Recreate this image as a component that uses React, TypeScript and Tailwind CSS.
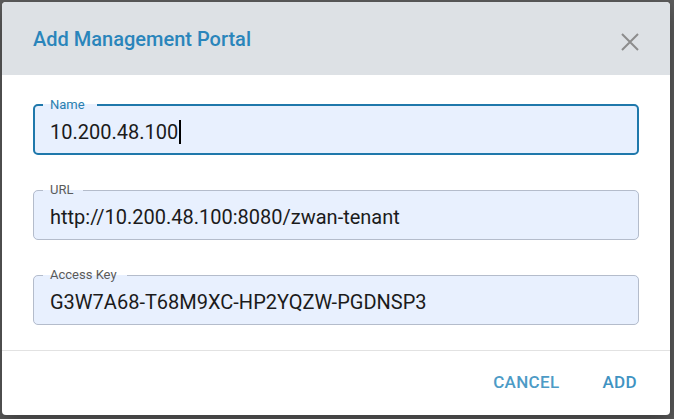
import React from "react";

type FieldProps = {
  label: string;
  value: string;
  focused?: boolean;
  notchRight: number;
};

function Field({ label, value, focused, notchRight }: FieldProps) {
  return (
    <fieldset
      className={
        focused
          ? "rounded-[5px] border-2 border-[#1f78ab] bg-[#e8f0fe] pl-[8px] pb-[1px]"
          : "rounded-[5px] border border-[#b4bccb] bg-[#e8f0fe] pl-[9px] pb-[1px]"
      }
    >
      <legend
        className={
          focused
            ? "pl-[7px] text-[13px] leading-[12px] text-[#2a7fb0]"
            : "pl-[7px] text-[13px] leading-[12px] text-[#5a5a5a]"
        }
        style={{ paddingRight: notchRight }}
      >
        {label}
      </legend>
      <div
        className={
          focused
            ? "flex h-[41px] items-center pl-[7px] text-[20px] text-[#1b1b1b]"
            : "flex h-[42px] items-center pl-[7px] text-[20px] text-[#1b1b1b]"
        }
      >
        <span>{value}</span>
        {focused ? (
          <span className="ml-[1px] h-[24px] w-[2px] bg-black" />
        ) : null}
      </div>
    </fieldset>
  );
}

export default function App() {
  return (
    <div
      className="h-[419px] w-[674px] overflow-hidden bg-[#5c5c5c] pl-[2px] pt-[2px]"
      style={{ fontFamily: "Roboto, 'Liberation Sans', sans-serif" }}
    >
      <div className="flex h-[413px] w-[668px] flex-col overflow-hidden rounded-[4px] bg-white shadow-[0_8px_20px_rgba(0,0,0,0.35)]">
        <div className="flex h-[73px] items-center justify-between bg-[#dde1e5] pl-[31px] pr-[31px]">
          <h2 className="text-[20px] font-medium text-[#2a85bb]">
            Add Management Portal
          </h2>
          <svg width="18" height="18" viewBox="0 0 18 18" className="mt-[6px]">
            <path
              d="M1 1 L17 17 M17 1 L1 17"
              stroke="#8c8c8c"
              strokeWidth="2"
              fill="none"
            />
          </svg>
        </div>
        <div className="flex flex-col gap-[29px] px-[31px] pb-[25px] pt-[24px]">
          <Field label="Name" value="10.200.48.100" focused notchRight={12} />
          <Field
            label="URL"
            value="http://10.200.48.100:8080/zwan-tenant"
            notchRight={10}
          />
          <Field
            label="Access Key"
            value="G3W7A68-T68M9XC-HP2YQZW-PGDNSP3"
            notchRight={10}
          />
        </div>
        <div className="flex flex-1 items-center justify-end gap-[27px] border-t border-[#e2e2e2] pr-[25px]">
          <button className="px-2 text-[17px] font-medium tracking-[0.02em] text-[#4d9bc6]">
            CANCEL
          </button>
          <button className="px-2 text-[17px] font-medium tracking-[0.02em] text-[#3f93c2]">
            ADD
          </button>
        </div>
      </div>
    </div>
  );
}
